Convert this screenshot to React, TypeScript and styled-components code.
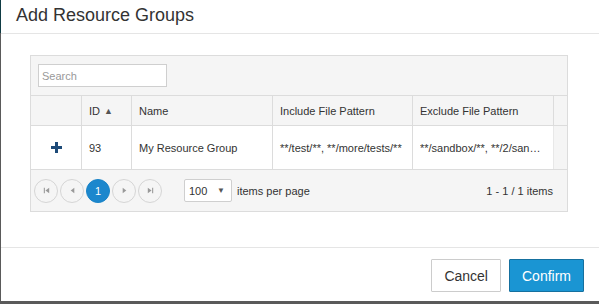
import React from "react";
import styled, { createGlobalStyle } from "styled-components";

const GlobalStyle = createGlobalStyle`
  html, body {
    margin: 0;
    padding: 0;
    background: #4a4a4a;
    font-family: "Liberation Sans", Arial, sans-serif;
  }
`;

//  page + backdrop
const Backdrop = styled.div`
  width: 599px;
  height: 304px;
  background: linear-gradient(to bottom, #0f3b44 0, #0f3b44 33px, #5a5a5a 33px);
  padding: 0 0 3px 1px;
  box-sizing: border-box;
  overflow: hidden;
`;

const Modal = styled.div`
  background: #fff;
  height: 100%;
  display: flex;
  flex-direction: column;
`;

const Header = styled.div`
  height: 34px;
  border-bottom: 1px solid #e5e5e5;
  display: flex;
  align-items: center;
  padding-left: 15px;
  box-sizing: border-box;
`;

const Title = styled.h4`
  margin: 0;
  font-size: 18px;
  font-weight: normal;
  color: #333;
  position: relative;
  top: -1px;
`;

const Body = styled.div`
  flex: 1;
  padding: 21px 30px 0 29px;
`;

const Footer = styled.div`
  border-top: 1px solid #e5e5e5;
  display: flex;
  justify-content: flex-end;
  gap: 8px;
  padding: 11px 15px 9px 0;
`;

const Button = styled.button<{ primary?: boolean }>`
  height: 33px;
  padding: 0 12px;
  font-family: inherit;
  font-size: 14px;
  border-radius: 1px;
  border: 1px solid ${p => (p.primary ? "#15709f" : "#cccccc")};
  background: ${p => (p.primary ? "#1a95d3" : "#fff")};
  color: ${p => (p.primary ? "#fff" : "#333")};
`;

//  grid
const Grid = styled.div`
  border: 1px solid #dcdcdc;
  width: 538px;
  box-sizing: border-box;
  font-size: 11px;
  color: #333;
`;

const Toolbar = styled.div`
  height: 40px;
  background: #f5f5f5;
  border-bottom: 1px solid #dcdcdc;
  display: flex;
  align-items: center;
  padding-left: 7px;
  box-sizing: border-box;
`;

const SearchInput = styled.input`
  width: 129px;
  height: 23px;
  box-sizing: border-box;
  border: 1px solid #cfcfcf;
  padding: 0 3px;
  font-family: inherit;
  font-size: 11px;
  &::placeholder {
    color: #999;
  }
`;

const Row = styled.div<{ head?: boolean }>`
  display: grid;
  grid-template-columns: 50px 50px 141px 140px 141px 14px;
  height: ${p => (p.head ? "30px" : "44px")};
  background: ${p => (p.head ? "#f5f5f5" : "#fff")};
  border-bottom: 1px solid #dcdcdc;
  box-sizing: border-box;
`;

const Cell = styled.div<{ center?: boolean; filler?: boolean }>`
  display: flex;
  align-items: center;
  justify-content: ${p => (p.center ? "center" : "flex-start")};
  padding: 0 ${p => (p.filler ? "0" : "7px")};
  border-left: ${p => (p.filler || p.center ? "none" : "1px solid #dcdcdc")};
  background: ${p => (p.filler ? "#f5f5f5" : "transparent")};
  white-space: nowrap;
  overflow: hidden;
`;

const FirstCell = styled(Cell)`
  border-left: none;
`;

const SortArrow = styled.span`
  font-size: 9px;
  margin-left: 4px;
  color: #555;
`;

const Ellipsis = styled.span`
  overflow: hidden;
  text-overflow: ellipsis;
`;

const Pager = styled.div`
  height: 41px;
  background: #f5f5f5;
  display: flex;
  align-items: center;
  padding: 0 14px 0 3px;
  box-sizing: border-box;
`;

const PageButtons = styled.div`
  display: flex;
  gap: 2px;
`;

const PageButton = styled.div<{ active?: boolean }>`
  width: 24px;
  height: 24px;
  box-sizing: border-box;
  border-radius: 50%;
  border: 1px solid ${p => (p.active ? "#1a84c8" : "#d5d5d5")};
  background: ${p => (p.active ? "#1c87cd" : "#f5f5f5")};
  color: ${p => (p.active ? "#fff" : "#999")};
  display: flex;
  align-items: center;
  justify-content: center;
  font-size: 11px;
`;

const PageSize = styled.div`
  margin-left: 22px;
  width: 48px;
  height: 23px;
  box-sizing: border-box;
  border: 1px solid #cfcfcf;
  border-radius: 2px;
  background: #fff;
  display: flex;
  align-items: center;
  justify-content: space-between;
  padding: 0 6px 0 4px;
  font-size: 11px;
`;

const Caret = styled.span`
  font-size: 8px;
  color: #555;
`;

const PagerLabel = styled.span`
  margin-left: 5px;
  font-size: 11px;
`;

const PagerInfo = styled.span`
  margin-left: auto;
  font-size: 11px;
`;

const Icon = ({ d }: { d: string }) => (
  <svg width="9" height="9" viewBox="0 0 10 10">
    <path d={d} fill="#999" />
  </svg>
);

const PlusIcon = () => (
  <svg width="11" height="11" viewBox="0 0 11 11">
    <path d="M4 0h3v4h4v3H7v4H4V7H0V4h4z" fill="#1d4a78" />
  </svg>
);

export default function App() {
  return (
    <>
      <GlobalStyle />
      <Backdrop>
        <Modal>
          <Header>
            <Title>Add Resource Groups</Title>
          </Header>
          <Body>
            <Grid>
              <Toolbar>
                <SearchInput placeholder="Search" />
              </Toolbar>
              <Row head>
                <FirstCell />
                <Cell>
                  ID<SortArrow>▲</SortArrow>
                </Cell>
                <Cell>Name</Cell>
                <Cell>Include File Pattern</Cell>
                <Cell>Exclude File Pattern</Cell>
                <Cell filler style={{ borderLeft: "1px solid #dcdcdc" }} />
              </Row>
              <Row>
                <Cell center>
                  <PlusIcon />
                </Cell>
                <Cell>93</Cell>
                <Cell>My Resource Group</Cell>
                <Cell>**/test/**, **/more/tests/**</Cell>
                <Cell>
                  <Ellipsis>**/sandbox/**, **/2/sandbox/**</Ellipsis>
                </Cell>
                <Cell filler style={{ borderLeft: "1px solid #e8e8e8" }} />
              </Row>
              <Pager>
                <PageButtons>
                  <PageButton>
                    <Icon d="M2 2h1.2v6H2zM8 2v6L3.8 5z" />
                  </PageButton>
                  <PageButton>
                    <Icon d="M7 2v6L3 5z" />
                  </PageButton>
                  <PageButton active>1</PageButton>
                  <PageButton>
                    <Icon d="M3 2v6l4-3z" />
                  </PageButton>
                  <PageButton>
                    <Icon d="M2 2v6l4.2-3zM6.8 2H8v6H6.8z" />
                  </PageButton>
                </PageButtons>
                <PageSize>
                  100<Caret>▼</Caret>
                </PageSize>
                <PagerLabel>items per page</PagerLabel>
                <PagerInfo>1 - 1 / 1 items</PagerInfo>
              </Pager>
            </Grid>
          </Body>
          <Footer>
            <Button>Cancel</Button>
            <Button primary>Confirm</Button>
          </Footer>
        </Modal>
      </Backdrop>
    </>
  );
}
